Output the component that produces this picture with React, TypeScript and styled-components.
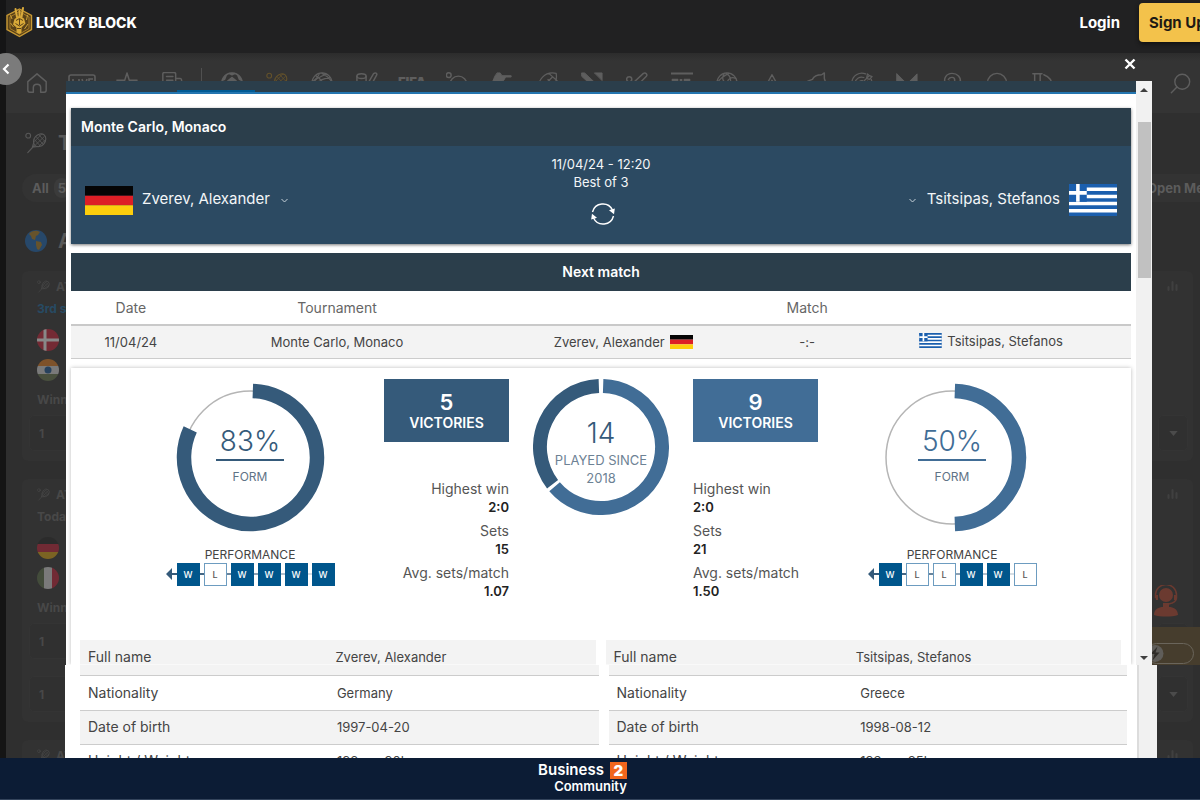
import React from "react";
import styled, { createGlobalStyle } from "styled-components";

const GlobalStyle = createGlobalStyle`
  *, *::before, *::after { box-sizing: border-box; }
  body { margin: 0; background: #2f2f2f; font-family: Inter, "Liberation Sans", sans-serif; }
  button { font-family: inherit; border: 0; padding: 0; background: none; color: inherit; }
  h1, h2, h3, p, dl, dd { margin: 0; }
  a { color: inherit; text-decoration: none; }
  svg { display: block; flex: none; }
`;

/* ---------- page shell ---------- */

const Page = styled.div`
  display: flex;
  flex-direction: column;
  height: 100vh;
  overflow: hidden;
`;

const TopBar = styled.header`
  display: flex;
  align-items: flex-start;
  justify-content: space-between;
  height: 53px;
  flex: none;
  background: #212122;
  border-left: 6px solid #151516;
`;

const Brand = styled.a`
  display: flex;
  align-items: center;
  gap: 3px;
  height: 44px;
  color: #fff;
  font-size: 14px;
  font-weight: 800;
`;

const Account = styled.div`
  display: flex;
  align-items: center;
  gap: 19px;
  height: 45px;
  overflow: visible;
`;

const LoginLink = styled.a`
  color: #fff;
  font-size: 15px;
  font-weight: 700;
`;

const SignUp = styled.button`
  width: 80px;
  height: 39px;
  margin-right: -19px;
  padding-left: 10px;
  border-radius: 4px;
  background: #f3c24b;
  color: #1d1a14;
  font-size: 15px;
  font-weight: 700;
  text-align: left;
  white-space: nowrap;
  box-shadow: 0 2px 4px #111;
`;

const Body = styled.div`
  position: relative;
  flex: 1;
  min-height: 0;
  overflow: hidden;
  padding-left: 6px;
  background: linear-gradient(to right, #151515 6px, #2f2f2f 6px);
`;

const SportsNav = styled.nav`
  display: flex;
  align-items: center;
  height: 60px;
  padding: 0 9px 0 8px;
  background: linear-gradient(#2c2c2c, #343434 8px);
  color: #5e5e5e;
`;

const SportLink = styled.a<{ $gold?: boolean }>`
  display: flex;
  justify-content: center;
  width: 45px;
  flex: none;
  color: ${(p) => (p.$gold ? "#63512b" : "inherit")};
`;

const NavRule = styled.span`
  width: 1px;
  height: 30px;
  margin: 0 7px;
  background: #505050;
`;

const SearchLink = styled.a`
  margin-left: auto;
`;

/* ---------- dimmed event list ---------- */

const Heading = styled.h2<{ $top: number }>`
  display: flex;
  align-items: center;
  gap: 11px;
  height: 24px;
  margin: ${(p) => p.$top}px 0 0 19px;
  color: #585858;
  font-size: 20px;
  font-weight: 700;
`;

const FilterRow = styled.div`
  display: flex;
  justify-content: space-between;
  height: 28px;
  margin: 19px -18px 0 16px;
  color: #5c5c5c;
`;

const FilterPill = styled.button`
  display: flex;
  align-items: center;
  gap: 5px;
  padding: 0 6px 0 10px;
  border-radius: 14px;
  background: #333;
  font-size: 13px;
  font-weight: 700;
`;

const Count = styled.span`
  padding: 2px 4px;
  border-radius: 10px;
  background: #3b3b3b;
`;

const EventCard = styled.section`
  display: flex;
  flex-direction: column;
  margin: 18px 7px 0 16px;
  padding: 7px 5px 10px 7px;
  border-radius: 6px;
  background: #323232;
  color: #484848;
  font-size: 12px;
  font-weight: 700;
`;

const EventHead = styled.div`
  display: flex;
  align-items: center;
  gap: 6px;
  height: 16px;
  padding: 0 10px 0 8px;
  svg:last-child { margin-left: auto; }
`;

const EventLine = styled.p<{ $blue?: boolean; $top: number }>`
  height: 20px;
  margin: ${(p) => p.$top}px 0 0 8px;
  line-height: 20px;
  color: ${(p) => (p.$blue ? "#274a63" : "inherit")};
`;

const EventFlag = styled.div`
  margin: 8px 0 0 8px;
  opacity: 0.42;
  ${EventLine} + & { margin-top: 10px; }
`;

const OddsRow = styled.div`
  display: flex;
  justify-content: space-between;
  height: 36px;
  margin-top: 5px;
  & + & { margin-top: 17px; }
`;

const OddsBox = styled.button<{ $wide?: boolean }>`
  display: flex;
  align-items: center;
  justify-content: ${(p) => (p.$wide ? "flex-start" : "center")};
  width: ${(p) => (p.$wide ? "200px" : "30px")};
  padding-left: ${(p) => (p.$wide ? "9px" : "0")};
  border: 1px solid #343434;
  border-radius: 5px;
  background: #303030;
  font-size: 12px;
  font-weight: 700;
`;

const Support = styled.div`
  position: absolute;
  top: 532px;
  right: 22px;
`;

const Promo = styled.div`
  position: absolute;
  top: 574px;
  right: 0;
  display: flex;
  align-items: flex-end;
  width: 60px;
  height: 38px;
  padding: 0 6px 1px;
  background: #463d2d;
`;

const PromoPill = styled.div`
  width: 100%;
  height: 21px;
  border: 1px solid #6a655b;
  border-radius: 11px;
`;

const BackButton = styled.button`
  position: absolute;
  top: 0;
  left: -10px;
  display: flex;
  align-items: center;
  justify-content: center;
  width: 32px;
  height: 32px;
  border-radius: 50%;
  background: #7b7b7b;
  color: #fff;
`;

/* ---------- modal ---------- */

const Overlay = styled.div`
  position: absolute;
  inset: 0;
  display: flex;
  flex-direction: column;
  pointer-events: none;
`;

const ModalTools = styled.div`
  display: flex;
  justify-content: flex-end;
  align-items: center;
  height: 28px;
  flex: none;
  padding: 0 64px 7px;
  color: #fff;
`;

const UpperPane = styled.div`
  display: flex;
  height: 584px;
  flex: none;
  margin: 0 48px 0 66px;
  background: #fff;
`;

const LowerPane = styled.div`
  display: flex;
  flex: 1;
  min-height: 0;
  overflow: hidden;
  margin: 0 43px 0 65px;
  background: #fff;
`;

const PaneBody = styled.div`
  flex: 1;
  min-width: 0;
`;

const ScrollTrack = styled.div`
  display: flex;
  flex-direction: column;
  align-items: center;
  width: 16px;
  padding: 7px 0 5px;
  background: #f1f1f1;
`;

const ScrollThumb = styled.div`
  width: 13px;
  height: 156px;
  margin: 30px 0 auto;
  background: #c1c1c1;
`;

const LowerTrack = styled.div`
  width: 20px;
  border-left: 2px solid #dcdcdc;
  background: #f1f1f1;
`;

const TabStrip = styled.div`
  display: flex;
  align-items: flex-end;
  height: 13px;
  padding-left: 111px;
  background: #2b3e4b;
  border-bottom: 2px solid #2476b0;
`;

const ActiveTab = styled.div`
  width: 78px;
  height: 2px;
  background: #005b94;
`;

const Card = styled.section<{ $top: number }>`
  margin: ${(p) => p.$top}px 5px 0;
`;

const MatchCard = styled(Card)`
  box-shadow: 0 1px 3px #777;
`;

const CardTitle = styled.h2<{ $center?: boolean }>`
  height: 38px;
  padding: 0 10px;
  background: #2b3e4b;
  color: #fff;
  font-size: 14px;
  font-weight: 600;
  line-height: 38px;
  text-align: ${(p) => (p.$center ? "center" : "left")};
`;

const MatchBody = styled.div`
  display: grid;
  grid-template-columns: 1fr auto 1fr;
  height: 98px;
  padding: 9px 14px 0;
  background: #2c4a62;
  color: #f3f6f8;
`;

const Team = styled.div<{ $right?: boolean }>`
  display: flex;
  flex-direction: ${(p) => (p.$right ? "row-reverse" : "row")};
  align-items: center;
  gap: 9px;
  height: 90px;
  font-size: 15px;
  line-height: 18px;
  span { padding-bottom: 2px; }
`;

const MatchInfo = styled.div`
  display: flex;
  flex-direction: column;
  align-items: center;
  font-size: 13px;
  line-height: 18px;
  svg { margin: 11px 0 0 4px; }
`;

const NextTable = styled.table`
  width: 100%;
  table-layout: fixed;
  border-collapse: collapse;
  color: #444;
  font-size: 13px;
  text-align: center;
  th { height: 34px; padding: 0; color: #666; font-size: 14px; font-weight: 400; border-bottom: 2px solid #c9c9c9; }
  td { height: 33px; padding: 0; background: #f3f3f3; border-bottom: 1px solid #ccc; }
`;

const InlineTeam = styled.span`
  display: inline-flex;
  align-items: center;
  gap: 5px;
`;

const StatsCard = styled(Card)`
  height: 297px;
  padding-top: 11px;
  box-shadow: 0 0 4px #bbb;
  clip-path: inset(-6px -5px 0 -5px);
`;

const StatsGrid = styled.div`
  display: grid;
  grid-template-columns: 1fr 125px 136px 125px 1fr;
  column-gap: 24px;
  height: 261px;
`;

const FormColumn = styled.div<{ $right?: boolean }>`
  display: flex;
  flex-direction: column;
  align-items: center;
  padding: ${(p) => (p.$right ? "4px 45px 0 0" : "4px 0 0 45px")};
  margin: ${(p) => (p.$right ? "0 0 0 -24px" : "0 -24px 0 0")};
`;

const RingBox = styled.div<{ $size: number }>`
  display: grid;
  width: ${(p) => p.$size}px;
  height: ${(p) => p.$size}px;
  place-items: center;
  > * { grid-area: 1 / 1; }
`;

const RingText = styled.div<{ $tone: string }>`
  display: flex;
  flex-direction: column;
  align-items: center;
  color: ${(p) => p.$tone};
`;

const FormText = styled(RingText)`
  padding-bottom: 6px;
`;

const PlayedText = styled(RingText)`
  padding-top: 9px;
`;

const RingValue = styled.strong`
  font-size: 28px;
  font-weight: 300;
  line-height: 36px;
`;

const PercentValue = styled(RingValue)`
  width: 68px;
  height: 38px;
  border-bottom: 2px solid currentColor;
  text-align: center;
`;

const FormLabel = styled.span`
  margin-top: 7px;
  color: #5f7386;
  font-size: 12px;
  line-height: 18px;
`;

const PlayedLabel = styled.span`
  width: 100px;
  color: #6d8294;
  font-size: 13px;
  line-height: 18px;
  text-align: center;
`;

const PerfTitle = styled.h3`
  margin-top: 15px;
  color: #444;
  font-size: 12px;
  font-weight: 400;
  line-height: 16px;
`;

const PerfRow = styled.div`
  display: flex;
  align-items: center;
`;

const PerfBox = styled.span<{ $won: boolean }>`
  width: 23px;
  height: 23px;
  border: 1px solid ${(p) => (p.$won ? "#00568c" : "#6d9cc0")};
  background: ${(p) => (p.$won ? "#00568c" : "#fff")};
  color: ${(p) => (p.$won ? "#fff" : "#555")};
  font-size: 9px;
  font-weight: 500;
  line-height: 21px;
  text-align: center;
`;

const PerfLink = styled.span<{ $fade: number }>`
  width: 4px;
  height: 2px;
  background: #355a7a;
  opacity: ${(p) => p.$fade};
`;

const StatColumn = styled.div<{ $right?: boolean }>`
  text-align: ${(p) => (p.$right ? "left" : "right")};
`;

const Victories = styled.div<{ $tone: string }>`
  display: flex;
  flex-direction: column;
  align-items: center;
  height: 63px;
  padding-top: 11px;
  background: ${(p) => p.$tone};
  color: #fff;
  font-size: 14px;
  font-weight: 600;
  line-height: 18px;
  strong { font-size: 22px; font-weight: 600; line-height: 24px; }
`;

const StatList = styled.dl`
  margin-top: 38px;
  color: #555;
  font-size: 14px;
  line-height: 18px;
  dd { margin-bottom: 6px; color: #222; font-size: 13px; font-weight: 600; }
`;

const DetailTables = styled.div<{ $gap: number; $end: number }>`
  display: grid;
  grid-template-columns: 1fr 1fr;
  column-gap: ${(p) => p.$gap}px;
  margin: 0 ${(p) => p.$end}px 0 9px;
`;

const DetailTable = styled.table<{ $lower?: boolean }>`
  width: 100%;
  table-layout: fixed;
  border-collapse: collapse;
  color: #444;
  font-size: 13px;
  th, td { height: ${(p) => (p.$lower ? 34 : 25)}px; padding: ${(p) => (p.$lower ? "0 8px" : "9px 8px 0")}; font-weight: 400; text-align: left; line-height: 16px; }
  th { font-size: 14px; }
  tr { background: ${(p) => (p.$lower ? "#fff" : "#f3f3f3")}; border-bottom: ${(p) => (p.$lower ? "1px solid #ccc" : "0")}; }
  tr:nth-child(even) { background: #f3f3f3; }
`;

const RowTail = styled.div`
  height: 11px;
  background: #f3f3f3;
  border-bottom: 1px solid #ccc;
`;

const LowerContent = styled(PaneBody)`
  padding-left: 6px;
`;

/* ---------- footer ---------- */

const Footer = styled.footer`
  display: flex;
  justify-content: center;
  align-items: flex-start;
  height: 42px;
  flex: none;
  padding: 3px 35px 0 0;
  background: #0c1c35;
  border-bottom: 1px solid #34445c;
  color: #fff;
`;

const FooterMark = styled.a`
  display: flex;
  flex-direction: column;
  align-items: flex-end;
  font-size: 13px;
  font-weight: 600;
  line-height: 14px;
`;

const FooterTop = styled.span`
  display: flex;
  align-items: center;
  gap: 6px;
  font-size: 15px;
  line-height: 18px;
`;

const FooterBadge = styled.b`
  width: 17px;
  height: 17px;
  background: #f1661d;
  line-height: 17px;
  text-align: center;
`;

/* ---------- drawings ---------- */

const Germany = ({ w, h }: { w: number; h: number }) => (
  <svg width={w} height={h} viewBox="0 0 48 30" preserveAspectRatio="none" aria-label="Germany">
    <path fill="#050505" d="M0 0h48v10H0z" />
    <path fill="#dd1f26" d="M0 10h48v10H0z" />
    <path fill="#fdce0c" d="M0 20h48v10H0z" />
  </svg>
);

const Greece = ({ w, h }: { w: number; h: number }) => (
  <svg width={w} height={h} viewBox="0 0 27 18" aria-label="Greece">
    <path fill="#1b5fae" d="M0 0h27v18H0z" />
    <path stroke="#fff" strokeWidth="2" d="M0 3h27M0 7h27M0 11h27M0 15h27" />
    <path fill="#1b5fae" d="M0 0h10v10H0z" />
    <path stroke="#fff" strokeWidth="2" d="M5 0v10M0 5h10" />
  </svg>
);

const bands: Record<string, React.ReactNode> = {
  dk: <><path fill="#d02038" d="M0 0h22v22H0z" /><path stroke="#fff" strokeWidth="3" d="M8 0v22M0 11h22" /></>,
  in: <><path fill="#e88020" d="M0 0h22v7H0z" /><path fill="#ddd" d="M0 7h22v8H0z" /><path fill="#6a7a50" d="M0 15h22v7H0z" /><circle cx="11" cy="11" r="3.5" fill="#1c5a98" /></>,
  de: <><path fill="#222" d="M0 0h22v7H0z" /><path fill="#c82038" d="M0 7h22v8H0z" /><path fill="#e0a810" d="M0 15h22v7H0z" /></>,
  it: <><path fill="#5c7048" d="M0 0h7v22H0z" /><path fill="#ddd" d="M7 0h8v22H7z" /><path fill="#c82038" d="M15 0h7v22h-7z" /></>,
};

const RoundFlag = ({ code }: { code: string }) => (
  <EventFlag>
    <svg width="22" height="22" viewBox="0 0 22 22">
      <clipPath id={"round-" + code}><circle cx="11" cy="11" r="11" /></clipPath>
      <g clipPath={`url(#round-${code})`}>{bands[code]}</g>
    </svg>
  </EventFlag>
);

const Line = ({ size = 22, children, w = 1.6 }: { size?: number; w?: number; children: React.ReactNode }) => (
  <svg width={size} height={size} viewBox="0 0 24 24" fill="none" stroke="currentColor" strokeWidth={w} strokeLinecap="round" strokeLinejoin="round">
    {children}
  </svg>
);

const Racket = ({ size = 22 }: { size?: number }) => (
  <Line size={size} w={1.2}>
    <circle cx="3.5" cy="4" r="2.6" />
    <ellipse cx="16" cy="9" rx="6" ry="7.6" transform="rotate(40 16 9)" />
    <path d="M10 15l-7 7.500M9.500 11.500L8 16.500l6-.6" />
    <path strokeWidth="0.9" d="M12 5l8 8.500M15 3l7 7.500M10.500 8.500l6 6.500M21 5l-9.500 9M18 2.500l-8 8M22 9l-6.500 6" />
  </Line>
);

const Bars = () => (
  <svg width="11" height="10" viewBox="0 0 11 10" stroke="#404040" strokeWidth="2" strokeLinecap="round">
    <path d="M1.500 6v3M5.500 1v8M9.500 4v5" />
  </svg>
);

const Down = () => (
  <svg width="9" height="5" viewBox="0 0 10 6"><path fill="#4b4b4b" d="M0 0h10L5 6z" /></svg>
);

const ChevronIcon = styled.svg`
  margin: 0 2px;
`;

const Chevron = () => (
  <ChevronIcon width="7" height="5" viewBox="0 0 7 5" fill="none" stroke="#c5d0d8"><path d="M.5 1l3 3 3-3" /></ChevronIcon>
);

const ScrollArrow = ({ down }: { down?: boolean }) => (
  <svg width="8" height="4" viewBox="0 0 8 4"><path fill="#404040" d={down ? "M0 0h8L4 4z" : "M0 4h8L4 0z"} /></svg>
);

const BrandHex = () => (
  <svg width="27" height="32" viewBox="0 0 27 32" fill="none">
    <path d="M13.500 3L25.500 9.500v14L13.500 30.500 1 23.500v-14z" fill="#5a4218" stroke="#c99a34" strokeWidth="1.400" />
    <path d="M13.500 5.500L23 11v11.500l-9.500 5.500-9.500-5.500V11z" stroke="#a77c26" />
    <path d="M9.500 3l1.500 8M13.500 5v6M17 2l-1.500 9" stroke="#d9aa3c" strokeWidth="2" strokeLinecap="round" />
    <path d="M8.500 13l4.500-3 5 2.500 1.500 5-4 4v5l-2 1.500-3-1.500v-5l-3.500-3z" fill="#d8a938" />
    <path d="M10 14.500l3.500-2 3.500 2M9.500 17.500l4 2.500 4-2.500M13.500 13v6M11 22.500h4" stroke="#5a4218" />
    <path d="M4.500 9l1.500 4M21.500 9l-1 5M4.500 17l3 4M22 18l-3.500 5" stroke="#caa03a" />
  </svg>
);

const sports: { name: string; art: React.ReactNode }[] = [
  { name: "Football", art: <Line><circle cx="12" cy="12" r="11" /><path fill="currentColor" d="M12 6l4.500 3.500L15 15H9L7.500 9.500zM9 1.500L12 3l3-1.500zM1.500 9L4 8l1.500-4zM22.500 9L20 8l-1.500-4z" /></Line> },
  { name: "Tennis", art: <Racket /> },
  { name: "Basketball", art: <Line w={1.3}><circle cx="12" cy="12" r="11" /><path d="M1.500 13C6 6 12 4 17 2.500M5 4c5 2 9 8 10 18M2 17C8 8 15 7 21 6M12 1.500c4 2 8 5 10.500 9M9 2c-1 3-4 6-7 8" /></Line> },
  { name: "Ice hockey", art: <Line><ellipse cx="6" cy="4.500" rx="5" ry="2.500" /><path d="M1 4.500v5c0 3 10 3 10 0v-5M19 2c2-2 4.500-.5 3.500 1.500L14 19l-8 3v-3l5-3z" /></Line> },
  { name: "FIFA", art: <svg width="30" height="22" viewBox="0 0 30 22"><text x="15" y="15" textAnchor="middle" fill="currentColor" fontFamily="Inter" fontSize="13" fontWeight="900">FIFA</text></svg> },
  { name: "Table tennis", art: <Line><circle cx="3" cy="3.500" r="2.600" /><circle cx="13.500" cy="14" r="9.500" /></Line> },
  { name: "Counter-Strike", art: <Line w={1}><path fill="currentColor" d="M7 1h3l2 3h10v1.500h-6L14 9l-5 3v10H6V12l-4-2 2-5z" /></Line> },
  { name: "American football", art: <Line w={1.4}><path d="M22 1.500C10-1 1 8 2 22 15 23 24 14 22 1.500zM14 1.500l9 8M6 17L18 5.500M10 11l2 2M13 8l2 2" /></Line> },
  { name: "Dota", art: <Line w={1}><path fill="currentColor" d="M1 1l3 0 19 18-3 3L1 5zM15 1h8v8z" /></Line> },
  { name: "Cricket", art: <Line><circle cx="3.500" cy="8" r="2.800" /><path d="M19 1.500c2.500-1.500 5 1.500 3 3.500L9 18l-4-3.500zM7 17l-4 5" /></Line> },
  { name: "MMA", art: <svg width="24" height="22" viewBox="0 0 24 22" fill="none" stroke="currentColor" strokeWidth="2"><path d="M1 1.500h22M1 20h22" /><path strokeWidth="2.600" d="M3 7v9M7 7v9M11 7v9M15 7v9M19 7v9M2 8h6M14 8h6" /></svg> },
  { name: "Volleyball", art: <Line w={1.4}><circle cx="12" cy="12" r="11" /><path d="M12 12C7 11 6 6 9 1.500M12 12c1-5 5-7 9.500-5M12 12c-1 5-5 8-9.500 6M14 1.500C9 4 4 7 1.500 12M16 10c0-4-2-7-5-8.500" /></Line> },
  { name: "Valorant", art: <Line><path d="M12 3L1.500 22h21zM12 9l-5 9h10z" /></Line> },
  { name: "Horse racing", art: <Line><path d="M2 10l5-2c2-4 6-5 10-5l3-2v6l3 9-4 2-4-4c-3 2-4 5-4 9M2 10l2 2 4-1" /></Line> },
  { name: "Darts", art: <Line w={1.4}><path d="M16 2A11 11 0 1 0 22 8M14 6a7 7 0 1 0 4 4M12.500 9.500a3 3 0 1 0 2 2M12 12l8-8M17 7l1-5 2 2 3 1-3 3z" /></Line> },
  { name: "Boxing league", art: <Line w={1}><path fill="currentColor" d="M1 2l11 11L23 2v20L12 14 1 22z" /></Line> },
  { name: "Boxing", art: <Line><path d="M5 20V13C2 7 6 1.500 12 1.500S22 6 21 11l-4 5v4zM8 8c2-3 7-3 7 1s-5 4-6 1M5 20h12" /></Line> },
  { name: "Snooker", art: <Line><circle cx="12" cy="12" r="10.500" /></Line> },
  { name: "Rugby", art: <Line><path d="M2 2h10M4 2v12M10 2v18M14 3c6 2 9 7 9 13H7" /></Line> },
];

const arc = (c: number, r: number, from: number, to: number) => {
  const at = (deg: number) => {
    const t = (deg * Math.PI) / 180;
    return `${(c + r * Math.sin(t)).toFixed(2)} ${(c - r * Math.cos(t)).toFixed(2)}`;
  };
  return `M${at(from)}A${r} ${r} 0 ${to - from > 180 ? 1 : 0} 1 ${at(to)}`;
};

type Player = {
  side: "left" | "right";
  tone: string;
  form: number;
  end: number;
  run: string;
  wins: number;
  stats: [string, string][];
  split: string;
  name: string;
  details: [string, string][];
};

const players: Player[] = [
  {
    side: "left", tone: "#355a7a", form: 83, end: 295, run: "WLWWWW", wins: 5,
    stats: [["Highest win", "2:0"], ["Sets", "15"], ["Avg. sets/match", "1.07"]],
    split: "48%", name: "Zverev, Alexander",
    details: [["Nationality", "Germany"], ["Date of birth", "1997-04-20"], ["Height / Weight", "198cm, 90kg"]],
  },
  {
    side: "right", tone: "#416d96", form: 50, end: 178, run: "WLLWWL", wins: 9,
    stats: [["Highest win", "2:0"], ["Sets", "21"], ["Avg. sets/match", "1.50"]],
    split: "47%", name: "Tsitsipas, Stefanos",
    details: [["Nationality", "Greece"], ["Date of birth", "1998-08-12"], ["Height / Weight", "193cm, 85kg"]],
  },
];

const Form = ({ p }: { p: Player }) => (
  <FormColumn $right={p.side === "right"}>
    <RingBox $size={149}>
      <svg width="149" height="149" viewBox="0 0 149 149" fill="none">
        <circle cx="74.500" cy="74.500" r="66.500" stroke="#b5b5b5" strokeWidth="1.500" />
        <path d={arc(74.5, 66.5, 2, p.end)} stroke={p.tone} strokeWidth="14.500" />
      </svg>
      <FormText $tone={p.tone}>
        <PercentValue>{p.form}%</PercentValue>
        <FormLabel>FORM</FormLabel>
      </FormText>
    </RingBox>
    <PerfTitle>PERFORMANCE</PerfTitle>
    <PerfRow>
      <svg width="11" height="12" viewBox="0 0 11 12" fill="#355a7a"><path d="M0 6l6-6v5h5v2H6v5z" /></svg>
      {p.run.split("").map((r, i) => (
        <React.Fragment key={i}>
          {i > 0 && <PerfLink $fade={1.1 - i * 0.18} />}
          <PerfBox $won={r === "W"}>{r}</PerfBox>
        </React.Fragment>
      ))}
    </PerfRow>
  </FormColumn>
);

const Stats = ({ p }: { p: Player }) => (
  <StatColumn $right={p.side === "right"}>
    <Victories $tone={p.tone}><strong>{p.wins}</strong>VICTORIES</Victories>
    <StatList>
      {p.stats.map(([k, v]) => (
        <React.Fragment key={k}><dt>{k}</dt><dd>{v}</dd></React.Fragment>
      ))}
    </StatList>
  </StatColumn>
);

const Details = ({ p, rows, lower }: { p: Player; rows: [string, string][]; lower?: boolean }) => (
  <DetailTable $lower={lower}>
    <colgroup><col width={p.split} /><col /></colgroup>
    <tbody>
      {rows.map(([k, v]) => <tr key={k}><th scope="row">{k}</th><td>{v}</td></tr>)}
    </tbody>
  </DetailTable>
);

const Event = ({ title, when, blue, flags, rows }: { title: string; when: string; blue?: boolean; flags: string[]; rows: number }) => (
  <EventCard>
    <EventHead><Racket size={13} />{title}<Bars /></EventHead>
    <EventLine $top={5} $blue={blue}>{when}</EventLine>
    {flags.map((f) => <RoundFlag key={f} code={f} />)}
    <EventLine $top={9}>Winner</EventLine>
    {Array.from({ length: rows }, (_, i) => (
      <OddsRow key={i}><OddsBox $wide>1</OddsBox><OddsBox aria-label="More odds"><Down /></OddsBox></OddsRow>
    ))}
  </EventCard>
);

export default function App() {
  const [left, right] = players;
  return (
    <Page>
      <GlobalStyle />
      <TopBar>
        <Brand href="#"><BrandHex />LUCKY BLOCK</Brand>
        <Account><LoginLink href="#">Login</LoginLink><SignUp>Sign Up</SignUp></Account>
      </TopBar>

      <Body>
        <SportsNav>
          <SportLink href="#" aria-label="Home"><Line><path d="M2 10.500L12 2l10 8.500V20c0 1.500-.5 2-2 2h-4v-5c0-5-8-5-8 0v5H4c-1.500 0-2-.5-2-2z" /></Line></SportLink>
          <SportLink href="#" aria-label="Live">
            <svg width="28" height="18" viewBox="0 0 28 18" fill="none" stroke="currentColor" strokeWidth="1.600"><rect x="1" y="1" width="26" height="16" rx="2" /><path d="M5 5v8h3M11 5v8M14 5l2.500 8L19 5M25 5h-4v8h4M21 9h3" /></svg>
          </SportLink>
          <SportLink href="#" aria-label="Favourites"><Line><path d="M12 1l2.500 8H23l-7 5 3 8-7-5-7 5 3-8-7-5h8.500z" /></Line></SportLink>
          <SportLink href="#" aria-label="Bets"><Line><path d="M2 22V2c0-1 .5-1.500 2-1.500h10c1.500 0 2 .5 2 1.500v20M16 7h5c1 0 1.500.5 1.500 2v10c0 3-4 3-4 3H4M6 5h7M6 9h7M6 13h7" /></Line></SportLink>
          <NavRule />
          {sports.map((s) => <SportLink key={s.name} href="#" $gold={s.name === "Tennis"} aria-label={s.name}>{s.art}</SportLink>)}
          <SearchLink href="#" aria-label="Search"><Line size={21}><circle cx="14" cy="10" r="8.500" /><path d="M8 16l-6.500 6.500" /></Line></SearchLink>
        </SportsNav>

        <Heading $top={18}><Racket />Tennis</Heading>
        <FilterRow><FilterPill>All <Count>5</Count></FilterPill><FilterPill>Open Men</FilterPill></FilterRow>
        <Heading $top={27}>
          <svg width="22" height="22" viewBox="0 0 22 22">
            <circle cx="11" cy="11" r="11" fill="#27486a" />
            <path fill="#66532c" d="M4 4c3-4 8-4 11-2l-2 3-2 1-1 4-3-1-1-3zM11 11l5 1 1 3-3 5-2-1-1-4z" />
          </svg>
          ATP
        </Heading>
        <Event title="ATP" when="3rd set" blue flags={["dk", "in"]} rows={1} />
        <Event title="ATP" when="Today" flags={["de", "it"]} rows={2} />
        <Event title="ATP" when="Today" flags={[]} rows={1} />

        <Support>
          <svg width="24" height="32" viewBox="0 0 24 32" fill="#6b3a30">
            <circle cx="12" cy="10" r="7" />
            <path d="M1.500 13v-3a10.500 10.500 0 0 1 21 0v3c0 3-3 5-8 6" fill="none" stroke="#6b3a30" strokeWidth="1.500" />
            <path d="M1 10h3v5H2zM20 10h3l-1 5h-2zM0 30c0-6 5-8 9-8v-4h6v4c4 0 9 2 9 8-6 2-18 2-24 0z" />
          </svg>
        </Support>
        <Promo><PromoPill>
          <svg width="22" height="19" viewBox="0 0 22 19"><circle cx="8" cy="9.500" r="8.500" fill="#5f5d59" /><path fill="#2f2c28" d="M10.500 2.500L3.500 10h4l-2 6.500 7-8h-4z" /></svg>
        </PromoPill></Promo>

        <Overlay role="dialog" aria-label="Head to head">
          <ModalTools>
            <button aria-label="Close">
              <svg width="12" height="12" viewBox="0 0 12 12" stroke="#fff" strokeWidth="2.400"><path d="M1.500 1.500l9 9M10.500 1.500l-9 9" /></svg>
            </button>
          </ModalTools>
          <UpperPane>
            <PaneBody>
              <TabStrip><ActiveTab /></TabStrip>
              <MatchCard $top={14}>
                <CardTitle>Monte Carlo, Monaco</CardTitle>
                <MatchBody>
                  <Team><Germany w={48} h={29} /><span>Zverev, Alexander</span><Chevron /></Team>
                  <MatchInfo>
                    <span>11/04/24 - 12:20</span>
                    <span>Best of 3</span>
                    <svg width="24" height="24" viewBox="0 0 24 24" fill="none" stroke="#fff" strokeWidth="1.400">
                      <path d="M1.500 10A10.700 10.700 0 0 1 21.500 8M22.500 14A10.700 10.700 0 0 1 2.500 16" />
                      <path d="M19.500 8.500l3.500-1-.5 3.500zM4.500 15.500L1 16.500l.5-3.500z" fill="#fff" />
                    </svg>
                  </MatchInfo>
                  <Team $right><Greece w={48} h={32} /><span>Tsitsipas, Stefanos</span><Chevron /></Team>
                </MatchBody>
              </MatchCard>
              <Card $top={9}>
                <CardTitle $center>Next match</CardTitle>
                <NextTable>
                  <colgroup><col width="11.3%" /><col width="27.6%" /><col width="26.4%" /><col width="8.3%" /><col width="26.4%" /></colgroup>
                  <thead><tr><th>Date</th><th>Tournament</th><th colSpan={3}>Match</th></tr></thead>
                  <tbody><tr>
                    <td>11/04/24</td>
                    <td>Monte Carlo, Monaco</td>
                    <td><InlineTeam>Zverev, Alexander<Germany w={23} h={14} /></InlineTeam></td>
                    <td>-:-</td>
                    <td><InlineTeam><Greece w={23} h={15} />Tsitsipas, Stefanos</InlineTeam></td>
                  </tr></tbody>
                </NextTable>
              </Card>
              <StatsCard $top={9}>
                <StatsGrid>
                  <Form p={left} />
                  <Stats p={left} />
                  <RingBox $size={136}>
                    <svg width="136" height="136" viewBox="0 0 137 137" fill="none" strokeWidth="14">
                      <path d={arc(68.5, 61.5, 2, 229.5)} stroke={right.tone} />
                      <path d={arc(68.5, 61.5, 232.5, 358)} stroke={left.tone} />
                    </svg>
                    <PlayedText $tone="#355a7a">
                      <RingValue>14</RingValue>
                      <PlayedLabel>PLAYED SINCE 2018</PlayedLabel>
                    </PlayedText>
                  </RingBox>
                  <Stats p={right} />
                  <Form p={right} />
                </StatsGrid>
                <DetailTables $gap={10} $end={10}>
                  {players.map((p) => <Details key={p.name} p={p} rows={[["Full name", p.name]]} />)}
                </DetailTables>
              </StatsCard>
            </PaneBody>
            <ScrollTrack><ScrollArrow /><ScrollThumb /><ScrollArrow down /></ScrollTrack>
          </UpperPane>
          <LowerPane>
            <LowerContent>
              <DetailTables $gap={10} $end={10}>
                {players.map((p) => <div key={p.name}><RowTail /><Details p={p} rows={p.details} lower /></div>)}
              </DetailTables>
            </LowerContent>
            <LowerTrack />
          </LowerPane>
        </Overlay>
        <BackButton aria-label="Back">
          <svg width="8" height="12" viewBox="0 0 8 12" fill="none" stroke="#fff" strokeWidth="2.200"><path d="M6.500 1.500L2 6l4.500 4.500" /></svg>
        </BackButton>
      </Body>

      <Footer>
        <FooterMark href="#"><FooterTop>Business <FooterBadge>2</FooterBadge></FooterTop>Community</FooterMark>
      </Footer>
    </Page>
  );
}
